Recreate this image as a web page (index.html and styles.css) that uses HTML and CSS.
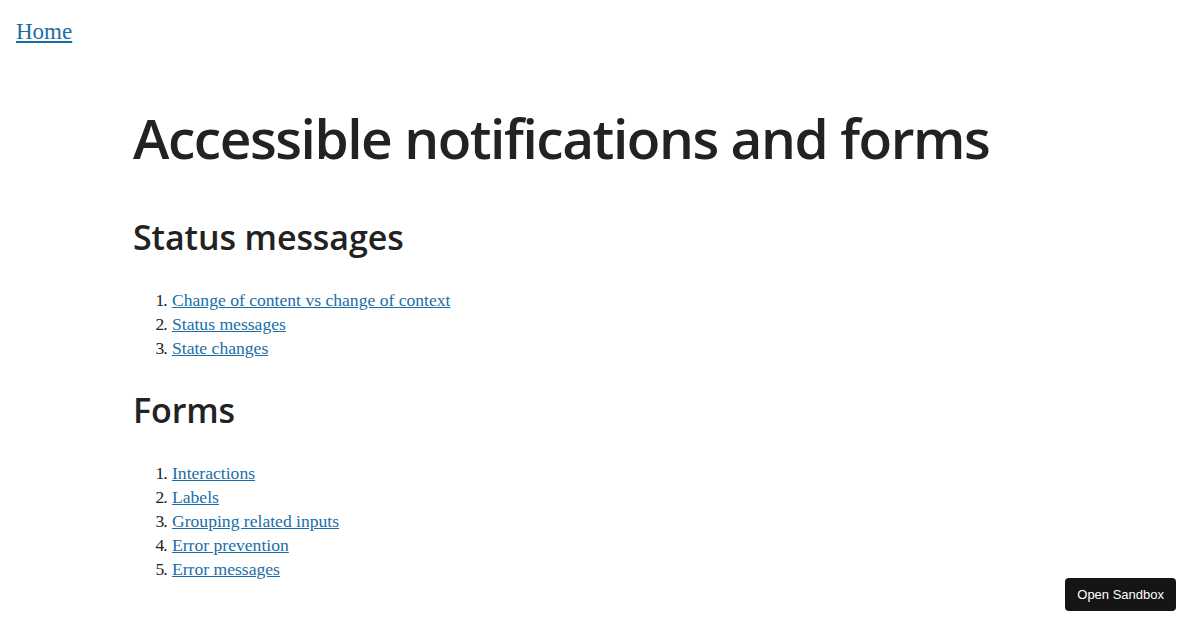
FILE: index.html
```html
<!DOCTYPE html>
<html lang="en">
<head>
<meta charset="utf-8">
<title>Accessible notifications and forms</title>
<link rel="stylesheet" href="styles.css">
</head>
<body>
<header class="site-header">
  <a class="home-link" href="#">Home</a>
</header>
<main class="content">
  <h1 class="page-title">Accessible notifications and forms</h1>
  <section class="section">
    <h2 class="section-title">Status messages</h2>
    <ol class="toc">
      <li><a href="#">Change of content vs change of context</a></li>
      <li><a href="#">Status messages</a></li>
      <li><a href="#">State changes</a></li>
    </ol>
  </section>
  <section class="section">
    <h2 class="section-title">Forms</h2>
    <ol class="toc">
      <li><a href="#">Interactions</a></li>
      <li><a href="#">Labels</a></li>
      <li><a href="#">Grouping related inputs</a></li>
      <li><a href="#">Error prevention</a></li>
      <li><a href="#">Error messages</a></li>
    </ol>
  </section>
</main>
<a class="sandbox-btn" href="#">Open Sandbox</a>
</body>
</html>
```
FILE: styles.css
```css
html, body {
  margin: 0;
  padding: 0;
  background: #ffffff;
}
body {
  font-family: "Liberation Serif", serif;
  color: #222222;
}
a {
  color: #1a6ea8;
}
.site-header {
  padding: 18px 16px 0;
  height: 52px;
}
.home-link {
  font-size: 23px;
  line-height: 28px;
}
.content {
  padding: 0 0 0 133px;
}
.page-title {
  font-family: "Open Sans", sans-serif;
  font-weight: 600;
  font-size: 55px;
  line-height: 72px;
  letter-spacing: -1.45px;
  margin: 32px 0 40px;
  color: #222222;
}
.section-title {
  font-family: "Open Sans", sans-serif;
  font-weight: 600;
  font-size: 34px;
  line-height: 46px;
  letter-spacing: -0.1px;
  margin: 0 0 28px;
  color: #222222;
}
.toc {
  margin: 0 0 27px;
  padding-left: 37px;
  font-size: 17.6px;
  line-height: 24px;
}
.toc li {
  padding-left: 2px;
}
.toc li::marker {
  letter-spacing: -1px;
}
.sandbox-btn {
  position: fixed;
  right: 24px;
  bottom: 19px;
  background: #151515;
  color: #ffffff;
  font-family: "Liberation Sans", Arial, sans-serif;
  font-size: 13px;
  line-height: 33px;
  padding: 0 12px;
  border-radius: 4px;
  text-decoration: none;
}
```
